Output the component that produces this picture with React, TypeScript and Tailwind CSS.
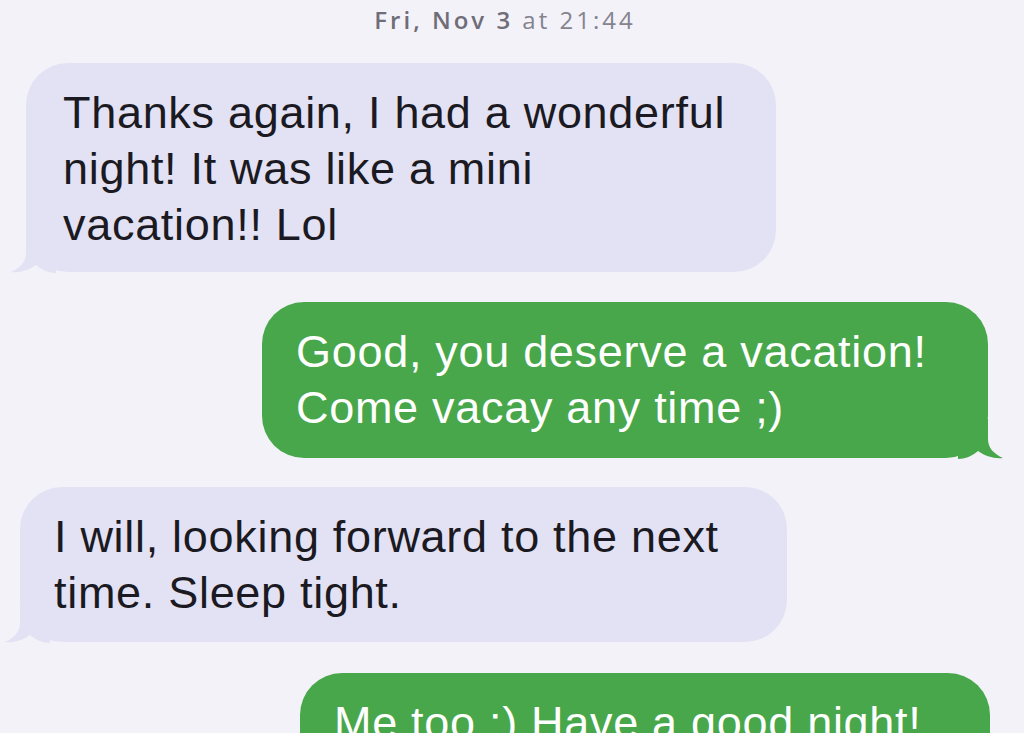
import React from "react";

const body = "font-['Liberation_Sans',Arial,sans-serif] text-[45px] leading-[56px] tracking-[0.7px]";

function Tail({ side, color }: { side: "left" | "right"; color: string }) {
  return (
    <svg
      width="50"
      height="40"
      viewBox="0 0 50 40"
      className={
        side === "left"
          ? "absolute -left-[20px] -bottom-[1px]"
          : "absolute -right-[20px] -bottom-[1px] -scale-x-100"
      }
    >
      <path
        d="M20 0 L20 20 C20 29 14 35 5 39 C14 40 23 37 30 32 C35 36 41 40 50 40 L50 0 Z"
        fill={color}
      />
    </svg>
  );
}

export default function App() {
  return (
    <div className="h-[733px] w-full overflow-hidden bg-[#f3f2f9]">
      {/* Timestamp */}
      <div className="pt-[5px] pr-[14px] text-center font-['Open_Sans',sans-serif] text-[24px] leading-[30px] tracking-[3px] text-[#84838e]">
        <span className="font-semibold text-[#6e6d78]">Fri, Nov 3</span> at 21:44
      </div>

      <div className="flex flex-col pt-[28px]">
        {/* Incoming */}
        <div className="relative ml-[26px] w-[750px] rounded-[42px] bg-[#e3e2f4] pl-[37px] pt-[22px] pb-[19px] text-[#1b1a22]">
          <p className={body}>
            Thanks again, I had a wonderful
            <br />
            night! It was like a mini
            <br />
            vacation!! Lol
          </p>
          <Tail side="left" color="#e3e2f4" />
        </div>

        {/* Outgoing */}
        <div className="relative mt-[30px] mr-[36px] self-end w-[726px] rounded-[42px] bg-[#48a74a] pl-[34px] pt-[22px] pb-[22px] text-white">
          <p className={body}>
            Good, you deserve a vacation!
            <br />
            Come vacay any time ;)
          </p>
          <Tail side="right" color="#48a74a" />
        </div>

        {/* Incoming */}
        <div className="relative mt-[29px] ml-[20px] w-[767px] rounded-[42px] bg-[#e3e2f4] pl-[34px] pt-[22px] pb-[21px] text-[#1b1a22]">
          <p className={body}>
            I will, looking forward to the next
            <br />
            time. Sleep tight.
          </p>
          <Tail side="left" color="#e3e2f4" />
        </div>

        {/* Outgoing */}
        <div className="relative mt-[31px] mr-[34px] self-end w-[690px] rounded-[42px] bg-[#48a74a] pl-[34px] pt-[22px] pb-[22px] text-white">
          <p className={body}>Me too :) Have a good night!</p>
          <Tail side="right" color="#48a74a" />
        </div>
      </div>
    </div>
  );
}
